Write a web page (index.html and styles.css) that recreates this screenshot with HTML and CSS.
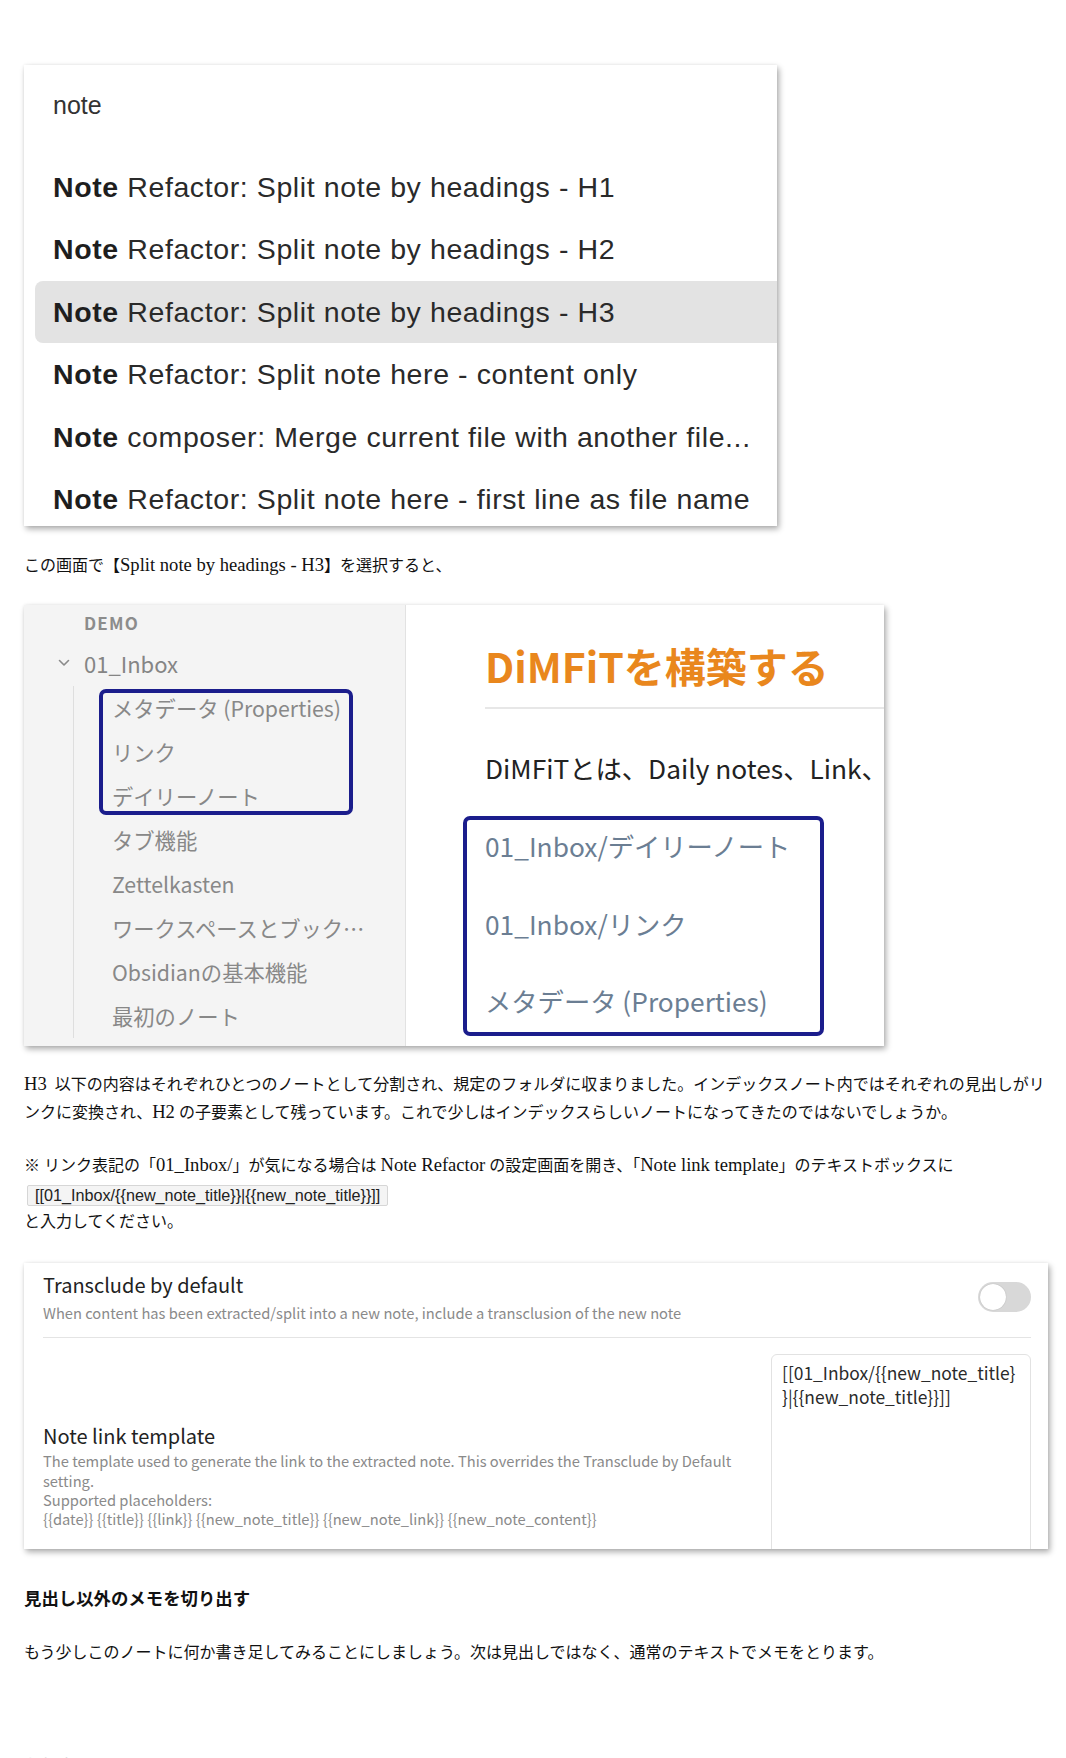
FILE: index.html
```html
<!DOCTYPE html>
<html lang="ja">
<head>
<meta charset="utf-8">
<title>Note Refactor</title>
<link rel="stylesheet" href="styles.css">
</head>
<body>
<div class="page">
  <figure class="shot cmd">
    <div class="cmd-search">note</div>
    <ul class="cmd-list">
      <li class="cmd-item"><b>Note</b> Refactor: Split note by headings - H1</li>
      <li class="cmd-item"><b>Note</b> Refactor: Split note by headings - H2</li>
      <li class="cmd-item is-active"><b>Note</b> Refactor: Split note by headings - H3</li>
      <li class="cmd-item"><b>Note</b> Refactor: Split note here - content only</li>
      <li class="cmd-item"><b>Note</b> composer: Merge current file with another file...</li>
      <li class="cmd-item"><b>Note</b> Refactor: Split note here - first line as file name</li>
    </ul>
  </figure>

  <p class="txt cap">この画面で【<span class="lat">Split note by headings - H3</span>】を選択すると、</p>

  <figure class="shot obs">
    <div class="side">
      <div class="side-head">DEMO</div>
      <div class="folder">
        <svg class="chev" viewBox="0 0 14 14" width="14" height="14"><path d="M2.5 4.5 L7 9 L11.5 4.5" fill="none" stroke="#8a8a8a" stroke-width="1.6" stroke-linecap="round" stroke-linejoin="round"/></svg>
        <span>01_Inbox</span>
      </div>
      <div class="children">
        <div class="file">メタデータ (Properties)</div>
        <div class="file">リンク</div>
        <div class="file">デイリーノート</div>
        <div class="file">タブ機能</div>
        <div class="file">Zettelkasten</div>
        <div class="file">ワークスペースとブック…</div>
        <div class="file">Obsidianの基本機能</div>
        <div class="file">最初のノート</div>
      </div>
    </div>
    <div class="pane">
      <div class="pane-title">DiMFiTを構築する</div>
      <div class="pane-text">DiMFiTとは、Daily notes、Link、Folders、Tags</div>
      <div class="pane-links">
        <div class="plink">01_Inbox/デイリーノート</div>
        <div class="plink">01_Inbox/リンク</div>
        <div class="plink">メタデータ (Properties)</div>
      </div>
    </div>
    <div class="mark mark-side"></div>
    <div class="mark mark-pane"></div>
  </figure>

  <p class="txt p1"><span class="lat">H3</span>&nbsp; 以下の内容はそれぞれひとつのノートとして分割され、規定のフォルダに収まりました。インデックスノート内ではそれぞれの見出しがリンクに変換され、<span class="lat">H2</span> の子要素として残っています。これで少しはインデックスらしいノートになってきたのではないでしょうか。</p>

  <p class="txt p2">※ リンク表記の「<span class="lat">01_Inbox/</span>」が気になる場合は <span class="lat">Note Refactor</span> の設定画面を開き、「<span class="lat">Note link template</span>」のテキストボックスに<br><code class="code">[[01_Inbox/{{new_note_title}}|{{new_note_title}}]]</code><br>と入力してください。</p>

  <figure class="shot settings">
    <div class="set-row set-row-top">
      <div class="set-info">
        <div class="set-name">Transclude by default</div>
        <div class="set-desc">When content has been extracted/split into a new note, include a transclusion of the new note</div>
      </div>
      <div class="toggle"><span class="knob"></span></div>
    </div>
    <div class="set-row set-row-tpl">
      <div class="set-info">
        <div class="set-name">Note link template</div>
        <div class="set-desc">The template used to generate the link to the extracted note. This overrides the Transclude by Default setting.<br>Supported placeholders:<br>{{date}} {{title}} {{link}} {{new_note_title}} {{new_note_link}} {{new_note_content}}</div>
      </div>
      <div class="tpl-box">[[01_Inbox/{{new_note_title}<br>}|{{new_note_title}}]]</div>
    </div>
  </figure>

  <h3 class="sec">見出し以外のメモを切り出す</h3>

  <p class="txt p3">もう少しこのノートに何か書き足してみることにしましょう。次は見出しではなく、通常のテキストでメモをとります。</p>

  <p class="tail">お役立ち</p>
</div>
</body>
</html>
```

FILE: styles.css
```css
html, body {
  margin: 0;
  padding: 0;
  background: #ffffff;
}

body {
  font-family: "Liberation Serif", "Noto Sans CJK JP", serif;
  color: #111;
}

.page {
  width: 1024px;
  padding: 65px 18px 0 24px;
  overflow: hidden;
  height: 1693px;
}

figure {
  margin: 0;
}

.shot {
  background: #fff;
  box-shadow: 2px 3px 6px rgba(0, 0, 0, 0.33), 0 0 3px rgba(0, 0, 0, 0.06);
  overflow: hidden;
}

/* ---------- command palette ---------- */
.cmd {
  width: 753px;
  height: 461px;
  font-family: "Liberation Sans", Arial, sans-serif;
  color: #2a2a2a;
}

.cmd-search {
  height: 91px;
  box-sizing: border-box;
  padding: 22px 0 0 29px;
  font-size: 25px;
  line-height: 36px;
  color: #333;
}

.cmd-list {
  list-style: none;
  margin: 0;
  padding: 0;
}

.cmd-item {
  height: 62.4px;
  line-height: 62px;
  margin-left: 11px;
  padding-left: 18px;
  font-size: 28.5px;
  letter-spacing: 0.6px;
  white-space: nowrap;
  border-radius: 8px 0 0 8px;
}

.cmd-item b {
  font-weight: 700;
  color: #1e1e1e;
}

.cmd-item.is-active {
  background: #e3e3e3;
}

/* ---------- body text ---------- */
.txt {
  font-size: 16px;
  line-height: 28px;
  margin: 0;
}

.lat {
  font-size: 18.6px;
  line-height: 16px;
}

.cap {
  margin-top: 26px;
  margin-bottom: 25px;
}

.p1 {
  margin-top: 25px;
}

.p2 {
  margin-top: 25px;
}

.code {
  display: inline-block;
  font-family: "Liberation Sans", Arial, sans-serif;
  font-size: 16.2px;
  line-height: 19px;
  padding: 0 7px;
  margin: 0 0 0 3px;
  background: #f4f4f4;
  border: 1px solid #d6d6d6;
  border-radius: 2px;
  color: #222;
  vertical-align: middle;
}

/* ---------- obsidian screenshot ---------- */
.obs {
  position: relative;
  width: 860px;
  height: 441px;
  display: flex;
  font-family: "Noto Sans CJK JP", sans-serif;
}

.side {
  width: 381px;
  flex: none;
  background: #f4f4f4;
  border-right: 1px solid #e2e2e2;
  box-sizing: content-box;
}

.side-head {
  height: 37px;
  line-height: 35px;
  padding-left: 60px;
  font-size: 17px;
  font-weight: 700;
  letter-spacing: 1.2px;
  color: #8c8c8c;
}

.folder {
  height: 44px;
  display: flex;
  align-items: center;
  font-size: 22px;
  color: #858585;
  margin-top: -1px;
}

.chev {
  margin-left: 33px;
  margin-right: 13px;
}

.children {
  margin-left: 49px;
  border-left: 1.5px solid #dedede;
  padding-left: 38px;
  margin-top: 1px;
}

.file {
  height: 44px;
  line-height: 44px;
  font-size: 21.3px;
  color: #888;
  white-space: nowrap;
}

.pane {
  flex: 1;
  overflow: hidden;
  padding-left: 79px;
  white-space: nowrap;
}

.pane-title {
  margin-top: 32px;
  padding-bottom: 14px;
  border-bottom: 2px solid #e7e7e7;
  font-size: 41px;
  line-height: 56px;
  font-weight: 700;
  color: #e9871d;
}

.pane-text {
  margin-top: 39px;
  font-size: 26.3px;
  line-height: 40px;
  color: #222;
}

.pane-links {
  margin-top: 38px;
}

.plink {
  height: 40px;
  line-height: 40px;
  margin-bottom: 37.5px;
  font-size: 26.3px;
  color: #6b7e93;
}

.mark {
  position: absolute;
  box-sizing: border-box;
  border: 4px solid #1b1d8c;
  border-radius: 7px;
}

.mark-side {
  left: 75px;
  top: 84px;
  width: 254px;
  height: 126px;
}

.mark-pane {
  left: 439px;
  top: 211px;
  width: 361px;
  height: 220px;
}

/* ---------- settings screenshot ---------- */
.settings {
  margin-top: 27px;
  width: 1024px;
  height: 286px;
  font-family: "Noto Sans CJK JP", sans-serif;
}

.set-row {
  display: flex;
  align-items: center;
  margin: 0 17px 0 19px;
}

.set-row-top {
  padding: 7px 0 13px;
  border-bottom: 1px solid #e4e4e4;
}

.set-row-tpl {
  padding-top: 16px;
}

.set-info {
  flex: 1;
}

.set-name {
  font-size: 20px;
  line-height: 30px;
  color: #222;
}

.set-row-top .set-desc {
  margin-top: 2px;
  font-size: 14.7px;
  line-height: 22px;
  color: #8a8a8a;
}

.set-row-tpl .set-desc {
  width: 700px;
  font-size: 14.7px;
  line-height: 19.3px;
  color: #8a8a8a;
}

.toggle {
  width: 53px;
  height: 30px;
  border-radius: 15px;
  background: #d8d8d8;
  position: relative;
  flex: none;
}

.knob {
  position: absolute;
  left: 2px;
  top: 2px;
  width: 26px;
  height: 26px;
  border-radius: 50%;
  background: #fff;
  box-shadow: 0 0 1px rgba(0, 0, 0, 0.3);
}

.tpl-box {
  flex: none;
  width: 260px;
  height: 242px;
  box-sizing: border-box;
  border: 1px solid #e2e2e2;
  border-radius: 6px;
  padding: 6px 10px;
  font-size: 17.4px;
  line-height: 24px;
  color: #2a2a2a;
  white-space: nowrap;
}

/* ---------- section heading ---------- */
.sec {
  margin: 35px 0 0;
  font-family: "Noto Sans CJK JP", sans-serif;
  font-size: 17.4px;
  line-height: 28px;
  font-weight: 700;
  color: #111;
}

.p3 {
  margin-top: 27px;
}

.tail {
  margin: 84px 0 0;
  font-family: "Noto Sans CJK JP", sans-serif;
  font-size: 17px;
  line-height: 28px;
  color: #d6d6d6;
}
```
